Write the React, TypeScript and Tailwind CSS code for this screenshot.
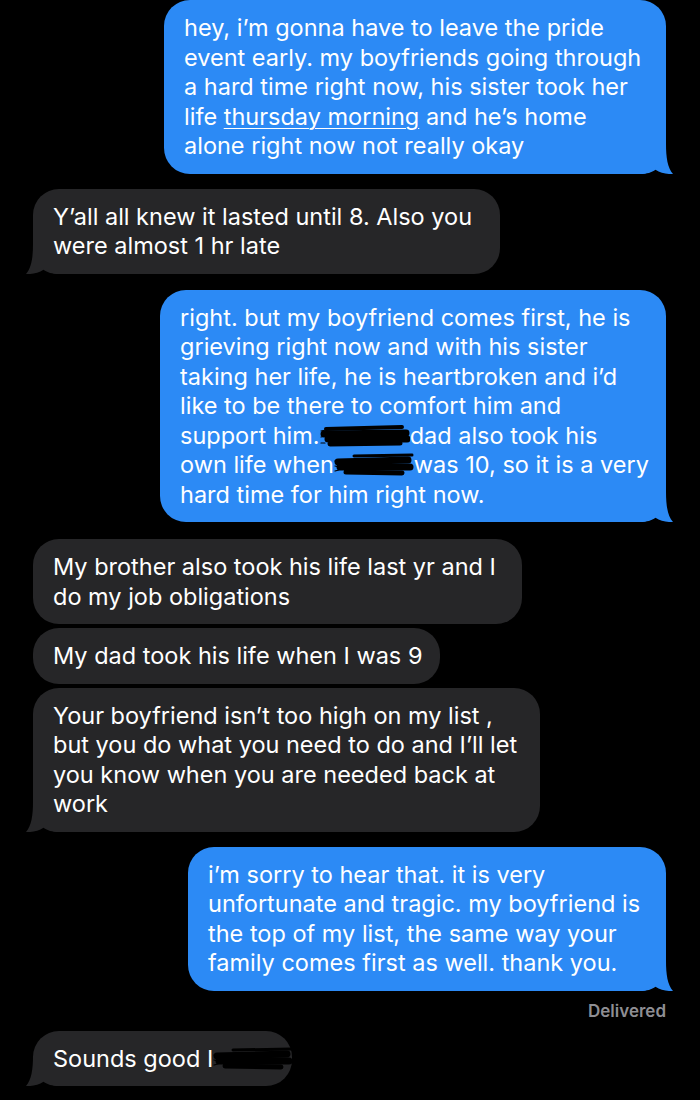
import type { ReactNode } from 'react';

const FONT = { fontFamily: 'Inter, "Noto Sans", "Liberation Sans", sans-serif' };

function Tail({ side, color }: { side: 'left' | 'right'; color: string }) {
  return (
    <svg
      width="33"
      height="30"
      viewBox="0 0 33 30"
      className={
        side === 'right'
          ? 'absolute bottom-0 -right-[7px]'
          : 'absolute bottom-0 -left-[7px] -scale-x-100'
      }
    >
      <path
        d="M0 0 L26 0 C26 13 27.5 24 33 30 C27 30.4 20.5 29 15.5 25.8 C11.5 28.6 7 30 0 30 Z"
        fill={color}
      />
    </svg>
  );
}

function Scribble({ width, variant = 0 }: { width: number; variant?: number }) {
  const w = width;
  return (
    <svg width={w} height="24" viewBox={`0 0 ${w} 24`} className="inline-block align-middle -mt-[3px]">
      {variant === 0 ? (
        <g stroke="#000" strokeLinecap="round" fill="none">
          <path d={`M6 5 L${w - 8} 3`} strokeWidth="4" />
          <path d={`M4 10 L${w - 4} 9`} strokeWidth="7" />
          <path d={`M8 15 L${w - 3} 15`} strokeWidth="7" />
          <path d={`M10 20 L${w - 10} 19`} strokeWidth="5" />
          <path d="M1 7 L6 6 M1 13 L5 12 M1 19 L5 19" strokeWidth="1.2" />
        </g>
      ) : (
        <g stroke="#000" strokeLinecap="round" fill="none">
          <path d={`M20 3 L${w - 2} 2`} strokeWidth="3" />
          <path d={`M4 9 L${w - 6} 7`} strokeWidth="7" />
          <path d={`M6 14 L${w - 4} 14`} strokeWidth="7" />
          <path d={`M12 19 L${w - 12} 20`} strokeWidth="5" />
          <path d="M1 8 L6 8 M1 13 L5 14 M1 18 L5 17" strokeWidth="1.2" />
        </g>
      )}
    </svg>
  );
}

function Bubble({
  side,
  width,
  tail,
  children,
}: {
  side: 'left' | 'right';
  width: string;
  tail?: boolean;
  children: ReactNode;
}) {
  const color = side === 'right' ? '#2c8af5' : '#262628';
  return (
    <div
      className={`relative ${width} rounded-[26px] px-[20px] py-[13px] text-[23.5px] leading-[29.5px] text-white whitespace-nowrap ${
        side === 'right' ? 'self-end bg-[#2c8af5]' : 'self-start bg-[#262628]'
      }`}
    >
      {tail && <Tail side={side} color={color} />}
      <div className="relative">{children}</div>
    </div>
  );
}

export default function App() {
  return (
    <div className="min-h-[1100px] w-[700px] bg-black pl-[33px] pr-[34px]" style={FONT}>
      <div className="flex flex-col">
        <Bubble side="right" width="w-[502px]" tail>
          hey, i’m gonna have to leave the pride
          <br />
          event early. my boyfriends going through
          <br />
          a hard time right now, his sister took her
          <br />
          life <span className="underline decoration-1 underline-offset-[3px]">thursday morning</span> and he’s home
          <br />
          alone right now not really okay
        </Bubble>

        <div className="mt-[15px]" />
        <Bubble side="left" width="w-[467px]" tail>
          Y’all all knew it lasted until 8. Also you
          <br />
          were almost 1 hr late
        </Bubble>

        <div className="mt-[16px]" />
        <Bubble side="right" width="w-[506px]" tail>
          right. but my boyfriend comes first, he is
          <br />
          grieving right now and with his sister
          <br />
          taking her life, he is heartbroken and i’d
          <br />
          like to be there to comfort him and
          <br />
          support him.
          <Scribble width={90} />
          dad also took his
          <br />
          own life when
          <Scribble width={80} variant={1} />
          was 10, so it is a very
          <br />
          hard time for him right now.
        </Bubble>

        <div className="mt-[17px]" />
        <Bubble side="left" width="w-[489px]">
          My brother also took his life last yr and I
          <br />
          do my job obligations
        </Bubble>
        <div className="mt-[4px]" />
        <Bubble side="left" width="w-[407px]">
          My dad took his life when I was 9
        </Bubble>
        <div className="mt-[4px]" />
        <Bubble side="left" width="w-[507px]" tail>
          Your boyfriend isn’t too high on my list ,
          <br />
          but you do what you need to do and I’ll let
          <br />
          you know when you are needed back at
          <br />
          work
        </Bubble>

        <div className="mt-[15px]" />
        <Bubble side="right" width="w-[478px]" tail>
          i’m sorry to hear that. it is very
          <br />
          unfortunate and tragic. my boyfriend is
          <br />
          the top of my list, the same way your
          <br />
          family comes first as well. thank you.
        </Bubble>

        <div className="mt-[10px] self-end text-[17px] font-semibold leading-[20px] text-[#8e8e93]">Delivered</div>

        <div className="mt-[10px]" />
        <Bubble side="left" width="w-[259px]" tail>
          Sounds good I
          <Scribble width={80} variant={1} />
        </Bubble>
      </div>
    </div>
  );
}
